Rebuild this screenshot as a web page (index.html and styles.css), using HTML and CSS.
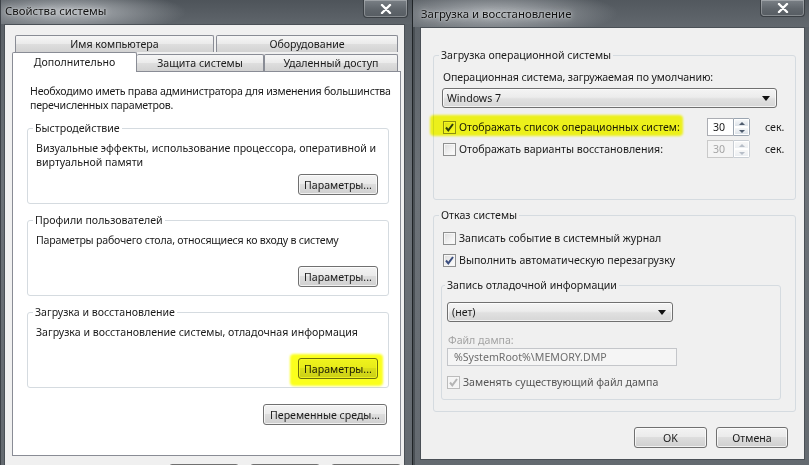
FILE: index.html
```html
<!DOCTYPE html>
<html lang="ru">
<head>
<meta charset="utf-8">
<title>Свойства системы</title>
<link rel="stylesheet" href="styles.css">
</head>
<body>
<div class="desktop">
  <section class="win win-left">
    <header class="titlebar">
      <span class="title">Свойства системы</span>
      <span class="close"><svg width="12" height="10" viewBox="0 0 12 10"><path d="M2 1 L10 9 M10 1 L2 9" stroke="#fff" stroke-width="2.4" stroke-linecap="round"/></svg></span>
    </header>
    <div class="client">
      <div class="tabs">
        <div class="tabrow back">
          <div class="tab t-name">Имя компьютера</div>
          <div class="tab t-hw">Оборудование</div>
        </div>
        <div class="tabrow front">
          <div class="tab active t-adv">Дополнительно</div>
          <div class="tab t-prot">Защита системы</div>
          <div class="tab t-remote">Удаленный доступ</div>
        </div>
      </div>
      <div class="panel">
        <p class="intro">Необходимо иметь права администратора для изменения большинства<br>перечисленных параметров.</p>
        <fieldset class="grp">
          <legend>Быстродействие</legend>
          <p class="desc">Визуальные эффекты, использование процессора, оперативной и<br>виртуальной памяти</p>
          <div class="actions"><button class="btn">Параметры...</button></div>
        </fieldset>
        <fieldset class="grp">
          <legend>Профили пользователей</legend>
          <p class="desc tight">Параметры рабочего стола, относящиеся ко входу в систему</p>
          <div class="actions"><button class="btn">Параметры...</button></div>
        </fieldset>
        <fieldset class="grp">
          <legend>Загрузка и восстановление</legend>
          <p class="desc">Загрузка и восстановление системы, отладочная информация</p>
          <div class="actions"><span class="hl hl-btn"><button class="btn">Параметры...</button></span></div>
        </fieldset>
        <div class="actions env"><button class="btn btn-env">Переменные среды...</button></div>
      </div>
      <div class="footer-left">
        <button class="btn btn-foot" aria-label="OK"></button>
        <button class="btn btn-foot" aria-label="Отмена"></button>
        <button class="btn btn-foot" aria-label="Применить"></button>
      </div>
    </div>
  </section>

  <section class="win win-right">
    <header class="titlebar titlebar-right">
      <span class="title">Загрузка и восстановление</span>
      <span class="close close-right"><svg width="12" height="10" viewBox="0 0 12 10"><path d="M2 1 L10 9 M10 1 L2 9" stroke="#fff" stroke-width="2.4" stroke-linecap="round"/></svg></span>
    </header>
    <div class="client client-right">
      <fieldset class="grp grp-os">
        <legend>Загрузка операционной системы</legend>
        <p class="label-os">Операционная система, загружаемая по умолчанию:</p>
        <div class="combo combo-os"><span>Windows 7</span><i class="arrow"></i></div>
        <div class="row-spin">
          <span class="hl hl-row"><span class="check checked"><svg width="11" height="11" viewBox="0 0 11 11"><path d="M2 5.5 L4.3 8.3 L9 2" fill="none" stroke="#2f3f68" stroke-width="2"/></svg></span><span class="check-label">Отображать список операционных систем:</span></span>
          <span class="spin"><span class="spin-val">30</span><span class="spin-btns"><i class="up"></i><i class="down"></i></span></span>
          <span class="sec">сек.</span>
        </div>
        <div class="row-spin row-spin2">
          <span class="check"></span><span class="check-label">Отображать варианты восстановления:</span>
          <span class="spin disabled"><span class="spin-val">30</span><span class="spin-btns"><i class="up"></i><i class="down"></i></span></span>
          <span class="sec">сек.</span>
        </div>
      </fieldset>
      <fieldset class="grp grp-fail">
        <legend>Отказ системы</legend>
        <div class="row-check row-first"><span class="check"></span><span class="check-label">Записать событие в системный журнал</span></div>
        <div class="row-check row-second"><span class="check checked"><svg width="11" height="11" viewBox="0 0 11 11"><path d="M2 5.5 L4.3 8.3 L9 2" fill="none" stroke="#3a4d7e" stroke-width="2"/></svg></span><span class="check-label">Выполнить автоматическую перезагрузку</span></div>
        <fieldset class="grp grp-dump">
          <legend>Запись отладочной информации</legend>
          <div class="combo combo-dump"><span>(нет)</span><i class="arrow"></i></div>
          <p class="label-dis">Файл дампа:</p>
          <div class="textbox">%SystemRoot%\MEMORY.DMP</div>
          <div class="row-check row-dis"><span class="check dis"><svg width="11" height="11" viewBox="0 0 11 11"><path d="M2 5.5 L4.3 8.3 L9 2" fill="none" stroke="#b4b4b4" stroke-width="2"/></svg></span><span class="check-label">Заменять существующий файл дампа</span></div>
        </fieldset>
      </fieldset>
      <div class="footer-right">
        <button class="btn btn-ok">OK</button>
        <button class="btn btn-cancel">Отмена</button>
      </div>
    </div>
  </section>
</div>
</body>
</html>
```

FILE: styles.css
```css
* { box-sizing: border-box; }

body {
  margin: 0;
  font-family: "Noto Sans", "Open Sans", sans-serif;
  font-size: 10.6px;
  color: #1a1a1a;
}

p { margin: 0; }

.desktop {
  display: flex;
  width: 809px;
  height: 465px;
  overflow: hidden;
  background: #3b4046;
}

/* ---------- windows ---------- */
.win {
  display: flex;
  flex-direction: column;
  flex: none;
  background: linear-gradient(180deg, #5a6066 0%, #6c7278 40%, #646a70 100%);
}

.win-left {
  width: 412px;
  border-left: 1px solid #3c4147;
}

.win-right {
  width: 397px;
  border-left: 1px solid #202427;
  box-shadow: inset 2px 0 0 #4a5055;
}

.titlebar {
  height: 24px;
  flex: none;
  display: flex;
  justify-content: space-between;
  align-items: flex-start;
  background:
    radial-gradient(ellipse 120px 22px at 65px 12px, rgba(190,194,198,0.9), rgba(190,194,198,0) 100%),
    linear-gradient(180deg, #4e545a 0%, #5f656b 100%);
}

.titlebar-right {
  height: 27px;
  background:
    radial-gradient(ellipse 125px 24px at 80px 13px, rgba(185,189,193,0.85), rgba(185,189,193,0) 100%),
    linear-gradient(180deg, #52585e 0%, #62686e 100%);
}

.title {
  padding-left: 4px;
  line-height: 22px;
  font-size: 11.4px;
  color: #111;
  text-shadow: 0 0 6px rgba(230,232,234,0.9), 0 0 2px rgba(230,232,234,0.8);
}

.titlebar-right .title {
  padding-left: 8px;
  line-height: 27px;
}

.close {
  width: 45px;
  height: 18px;
  margin-right: 4px;
  display: flex;
  align-items: center;
  justify-content: center;
  border: 1px solid #3a3f44;
  border-top: none;
  border-radius: 0 0 4px 4px;
  background: linear-gradient(180deg, #7a8086 0%, #60666c 55%, #565c62 100%);
  box-shadow: inset 0 0 0 1px rgba(255,255,255,0.28);
}

.close-right {
  height: 17px;
}

/* ---------- left window client ---------- */
.client {
  flex: 1;
  margin-left: 3px;
  margin-right: 7px;
  border: 1px solid #4a5056;
  border-bottom: none;
  background: #f0f0f0;
  padding: 10px 3px 0 7px;
}

.tabs {
  display: flex;
  flex-direction: column;
}

.tabrow {
  display: flex;
}

.tabrow.back {
  height: 17px;
  padding-left: 3px;
  gap: 2px;
}

.tabrow.front {
  height: 19px;
  align-items: flex-end;
  position: relative;
  z-index: 2;
}

.tab {
  height: 17px;
  border: 1px solid #898c95;
  border-bottom: none;
  border-radius: 2px 2px 0 0;
  background: linear-gradient(180deg, #f6f6f6 0%, #ebebeb 48%, #dedede 52%, #d2d2d2 100%);
  text-align: center;
  line-height: 16px;
  white-space: nowrap;
}

.t-name { width: 199px; }
.t-hw { width: 182px; }
.t-adv { width: 125px; }
.t-prot { width: 127px; border-left: none; }
.t-remote { width: 134px; }

.tab.active {
  height: 20px;
  margin-bottom: -1px;
  background: #fff;
  line-height: 19px;
}

.panel {
  height: 385px;
  border: 1px solid #898c95;
  background: #fff;
  padding: 12px 11px 0 14px;
}

.intro {
  margin-left: 3px;
  line-height: 14px;
  white-space: nowrap;
  letter-spacing: -0.22px;
}

.grp {
  margin: 9px 0 0;
  padding: 0 10px 8px 8px;
  border: 1px solid #d5dbe0;
  border-radius: 3px;
  min-width: 0;
}

.grp legend {
  padding: 0 2px;
  margin-left: -3px;
  line-height: 14px;
}

.desc {
  margin-top: 6px;
  min-height: 28px;
  line-height: 14px;
  white-space: nowrap;
}

.desc.tight { letter-spacing: -0.2px; }

.actions {
  display: flex;
  justify-content: flex-end;
  margin-top: 5px;
}

.btn {
  height: 21px;
  width: 80px;
  padding: 0;
  font: inherit;
  color: #1a1a1a;
  white-space: nowrap;
  border: 1px solid #707070;
  border-radius: 3px;
  background: linear-gradient(180deg, #f3f3f3 0%, #ebebeb 45%, #dddddd 50%, #cfcfcf 100%);
  box-shadow: inset 0 0 0 1px rgba(255,255,255,0.7);
  line-height: 18px;
}

.env {
  margin-top: 16px;
  margin-right: 2px;
}

.btn-env { width: 124px; }

.footer-left {
  display: flex;
  justify-content: flex-end;
  gap: 11px;
  margin-top: 8px;
}

.btn-foot { width: 70px; }

/* highlight marker */
.hl {
  position: relative;
  display: inline-flex;
  align-items: center;
}

.hl::after {
  content: "";
  position: absolute;
  background: #fbff1c;
  mix-blend-mode: multiply;
  pointer-events: none;
  filter: blur(1.2px);
  border-radius: 4px;
}

.hl-btn::after {
  inset: -4px -5px -7px -8px;
}

.hl-row::after {
  inset: -5px -3px -2px -13px;
  filter: blur(0.8px);
}

/* ---------- right window ---------- */
.client-right {
  margin-left: 7px;
  margin-right: 4px;
  margin-bottom: 5px;
  border-bottom: 1px solid #4a5056;
  padding: 20px 8px 0 12px;
}

.grp-os {
  margin-top: 0;
  padding: 0 8px 40px 8px;
}

.label-os {
  margin-top: 8px;
  margin-left: 1px;
  line-height: 14px;
  letter-spacing: -0.1px;
}

.combo {
  display: flex;
  align-items: center;
  justify-content: space-between;
  height: 20px;
  border: 1px solid #707070;
  border-radius: 3px;
  background: linear-gradient(180deg, #f4f4f4 0%, #ececec 45%, #e0e0e0 55%, #d6d6d6 100%);
  box-shadow: inset 0 0 0 1px rgba(255,255,255,0.7);
  padding: 0 6px 0 4px;
}

.combo-os {
  margin-top: 4px;
  width: 335px;
}

.arrow {
  width: 0;
  height: 0;
  border-left: 4px solid transparent;
  border-right: 4px solid transparent;
  border-top: 5px solid #111;
}

.row-spin {
  display: flex;
  align-items: center;
  height: 20px;
  margin-top: 9px;
  padding-left: 1px;
}

.row-spin2 { margin-top: 2px; }

.row-spin .hl { flex: none; }

.row-spin2 .check-label { flex: none; }

.spin {
  margin-left: auto;
  display: flex;
  height: 18px;
  width: 43px;
}

.spin-val {
  width: 26px;
  height: 18px;
  border: 1px solid #abadb3;
  border-right: none;
  background: #fff;
  padding-left: 5px;
  line-height: 16px;
}

.spin-btns {
  width: 17px;
  display: flex;
  flex-direction: column;
  border: 1px solid #9ba5b1;
  border-radius: 0 2px 2px 0;
  background: #fff;
}

.spin-btns i {
  flex: 1;
  display: flex;
  align-items: center;
  justify-content: center;
  background: linear-gradient(180deg, #f5f7f9, #dde3ea);
  border: 1px solid #fff;
}

.spin-btns .up::before {
  content: "";
  border-left: 3px solid transparent;
  border-right: 3px solid transparent;
  border-bottom: 3px solid #4f5c6e;
}

.spin-btns .down::before {
  content: "";
  border-left: 3px solid transparent;
  border-right: 3px solid transparent;
  border-top: 3px solid #4f5c6e;
}

.spin.disabled .spin-val {
  color: #a5a5a5;
  background: #f4f4f4;
  border-color: #c9c9c9;
}

.spin.disabled .spin-btns { border-color: #c9ced4; }
.spin.disabled .spin-btns i { background: linear-gradient(180deg, #f7f7f7, #eceff2); }
.spin.disabled .up::before { border-bottom-color: #b7bec8; }
.spin.disabled .down::before { border-top-color: #b7bec8; }

.sec {
  width: 22px;
  margin-left: 15px;
  flex: none;
}

.check {
  width: 13px;
  height: 13px;
  flex: none;
  display: inline-flex;
  align-items: center;
  justify-content: center;
  border: 1px solid #8e8f8f;
  background: linear-gradient(135deg, #dcdcdc 0%, #f2f2f2 60%, #fdfdfd 100%);
  box-shadow: inset 0 0 0 1px #f6f6f6;
}

.check.dis {
  border-color: #bcbcbc;
  background: #f4f4f4;
}

.check-label {
  margin-left: 3px;
  white-space: nowrap;
}

.grp-fail {
  margin-top: 8px;
  padding: 0 14px 11px 7px;
}

.grp-fail > legend { margin-left: -2px; }

.row-check {
  display: flex;
  align-items: center;
  height: 18px;
  padding-left: 2px;
}

.row-first { margin-top: 7px; }
.row-second { margin-top: 4px; }

.grp-dump {
  margin-top: 9px;
  padding: 0 8px 8px 5px;
}

.grp-dump > legend { margin-left: -2px; }

.combo-dump {
  margin-top: 10px;
  width: 226px;
}

.label-dis {
  margin-top: 11px;
  margin-left: 1px;
  line-height: 14px;
  color: #a3a3a3;
}

.textbox {
  margin-top: 1px;
  width: 230px;
  height: 18px;
  border: 1px solid #c4c6ca;
  background: #f5f5f5;
  color: #6d6d6d;
  padding-left: 6px;
  line-height: 16px;
}

.row-dis {
  margin-top: 7px;
  padding-left: 0;
  color: #555;
}

.footer-right {
  display: flex;
  justify-content: flex-end;
  gap: 9px;
  margin-top: 15px;
  margin-right: 8px;
}

.btn-ok { width: 73px; }
.btn-cancel { width: 72px; }
```
